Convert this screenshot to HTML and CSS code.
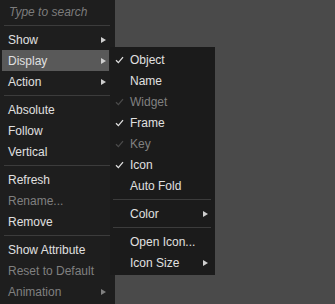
FILE: index.html
```html
<!DOCTYPE html>
<html lang="en">
<head>
    <meta charset="UTF-8">
    <title>Context Menu</title>
    <link rel="stylesheet" href="styles.css">
</head>
<body>
    <div class="menu">
        <div class="search">Type to search</div>
        <div class="sep"></div>
        <div class="item">Show<span class="arrow"></span></div>
        <div class="item active">Display<span class="arrow"></span></div>
        <div class="item">Action<span class="arrow"></span></div>
        <div class="sep"></div>
        <div class="item">Absolute</div>
        <div class="item">Follow</div>
        <div class="item">Vertical</div>
        <div class="sep"></div>
        <div class="item">Refresh</div>
        <div class="item disabled">Rename...</div>
        <div class="item">Remove</div>
        <div class="sep"></div>
        <div class="item">Show Attribute</div>
        <div class="item disabled">Reset to Default</div>
        <div class="item disabled">Animation<span class="arrow"></span></div>
    </div>

    <div class="submenu">
        <div class="item"><span class="check"><svg width="9" height="8" viewBox="0 0 9 8"><polyline points="1,4.2 3.4,6.6 8,1.2"/></svg></span>Object</div>
        <div class="item"><span class="check"></span>Name</div>
        <div class="item disabled"><span class="check"><svg width="9" height="8" viewBox="0 0 9 8"><polyline points="1,4.2 3.4,6.6 8,1.2"/></svg></span>Widget</div>
        <div class="item"><span class="check"><svg width="9" height="8" viewBox="0 0 9 8"><polyline points="1,4.2 3.4,6.6 8,1.2"/></svg></span>Frame</div>
        <div class="item disabled"><span class="check"><svg width="9" height="8" viewBox="0 0 9 8"><polyline points="1,4.2 3.4,6.6 8,1.2"/></svg></span>Key</div>
        <div class="item"><span class="check"><svg width="9" height="8" viewBox="0 0 9 8"><polyline points="1,4.2 3.4,6.6 8,1.2"/></svg></span>Icon</div>
        <div class="item"><span class="check"></span>Auto Fold</div>
        <div class="sep"></div>
        <div class="item"><span class="check"></span>Color<span class="arrow"></span></div>
        <div class="sep"></div>
        <div class="item"><span class="check"></span>Open Icon...</div>
        <div class="item"><span class="check"></span>Icon Size<span class="arrow"></span></div>
    </div>
</body>
</html>
```

FILE: styles.css
```css
body {
    margin: 0;
    height: 304px;
    overflow: hidden;
    background: #4a4a4a;
    font-family: "Liberation Sans", Arial, sans-serif;
    font-size: 12px;
    color: #e0e0e0;
}
.menu {
    width: 115px;
    height: 304px;
    background: #1e1e1e;
}
.search {
    height: 24px;
    line-height: 24px;
    padding-left: 9px;
    font-style: italic;
    color: #7c7c7c;
}
.sep {
    height: 7px;
    display: flex;
    align-items: center;
    padding: 0 5px 0 4px;
}
.sep::before {
    content: "";
    flex: 1;
    height: 1px;
    background: #3c3c3c;
}
.menu .search + .sep {
    height: 4px;
    align-items: flex-start;
    padding-top: 1px;
}
.item {
    height: 21px;
    display: flex;
    align-items: center;
    padding-left: 8px;
    position: relative;
}
.menu .item {
    margin: 0 6px 0 2px;
    padding-left: 6px;
}
.item.active {
    background: #595959;
}
.item.disabled {
    color: #808080;
}
.arrow {
    margin-left: auto;
    margin-right: 3px;
    width: 0;
    height: 0;
    border-top: 3.5px solid transparent;
    border-bottom: 3.5px solid transparent;
    border-left: 5px solid #cfcfcf;
}
.item.disabled .arrow {
    border-left-color: #808080;
}

.submenu {
    position: absolute;
    left: 110px;
    top: 47px;
    width: 105px;
    padding: 2px 0;
    background: #1b1b1b;
}
.submenu .item {
    padding-left: 5px;
    margin-right: 4px;
}
.submenu .sep {
    padding: 0 4px 0 3px;
}
.check {
    width: 15px;
    display: flex;
    align-items: center;
}
.check svg {
    fill: none;
    stroke: #e0e0e0;
    stroke-width: 1.3;
}
.item.disabled .check svg {
    stroke: #4a4a4a;
}
```
